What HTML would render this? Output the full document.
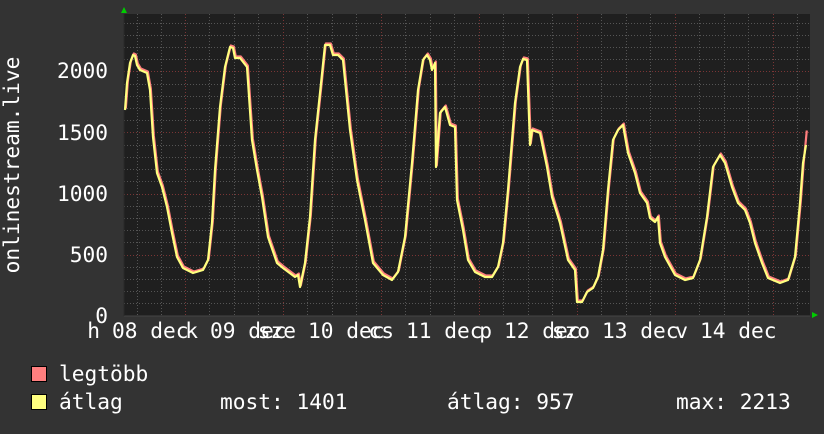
<!DOCTYPE html>
<html><head><meta charset="utf-8"><style>
html,body{margin:0;padding:0;background:#333333;}
body{width:824px;height:430px;overflow:hidden;position:relative;font-family:"DejaVu Sans Mono","Liberation Mono",monospace;color:#fff;}
svg text{font-family:"DejaVu Sans Mono","Liberation Mono",monospace;fill:#fff;}
</style></head><body>
<svg width="824" height="430" viewBox="0 0 824 430" xmlns="http://www.w3.org/2000/svg">
<rect x="0" y="0" width="824" height="430" fill="#333333"/>
<rect x="124" y="14" width="686" height="302" fill="#1f1f1f"/>
<g stroke="#555" stroke-width="1" stroke-dasharray="1,2">
<path d="M124 303.5H810M124 291.5H810M124 279.5H810M124 267.5H810M124 242.5H810M124 230.5H810M124 218.5H810M124 206.5H810M124 181.5H810M124 169.5H810M124 157.5H810M124 145.5H810M124 120.5H810M124 108.5H810M124 96.5H810M124 84.5H810M124 59.5H810M124 47.5H810M124 35.5H810M124 23.5H810"/>
<path d="M137.5 14V316M161.5 14V316M209.5 14V316M234.5 14V316M258.5 14V316M307.5 14V316M332.5 14V316M356.5 14V316M405.5 14V316M430.5 14V316M454.5 14V316M503.5 14V316M528.5 14V316M552.5 14V316M601.5 14V316M626.5 14V316M650.5 14V316M699.5 14V316M724.5 14V316M748.5 14V316M797.5 14V316"/>
</g>
<g stroke="#7a3535" stroke-width="1" stroke-dasharray="1,2">
<path d="M124 255.5H810M124 194.5H810M124 132.5H810M124 71.5H810"/>
<path d="M185.5 14V316M283.5 14V316M381.5 14V316M479.5 14V316M577.5 14V316M675.5 14V316M773.5 14V316"/>
</g>
<path d="M124 316H810" stroke="#444" stroke-width="1"/>
<path d="M124 14V316" stroke="#2a2a2a" stroke-width="1"/>
<polygon points="121,13 127,13 124,7" fill="#00cc00"/>
<polygon points="812,312 812,318 818,315" fill="#00cc00"/>
<g fill="none" stroke-linejoin="round">
<polyline transform="translate(0.8,-1.5)" stroke="#ff7f7f" stroke-width="2.2" points="125,110 127,83 130,63 133,55 135,56 137,65 140,70 147,73 150,90 153,137 157,173 162,187 167,207 172,233 177,257 183,268 193,273 203,270 208,260 212,223 215,170 220,107 225,67 230,47 233,48 235,58 240,58 247,67 252,140 257,170 262,197 268,237 277,263 283,268 295,277 298,275 300,287 305,263 310,217 315,140 320,93 325,45 330,45 333,55 338,55 343,60 350,130 357,180 365,220 373,263 383,275 392,280 398,272 405,237 412,163 418,90 423,60 427,55 430,60 432,70 435,63 436,167 440,113 445,107 450,125 455,127 457,200 463,230 468,260 475,272 485,277 492,277 498,267 503,243 508,190 515,103 520,67 523,59 527,60 530,145 532,130 540,133 547,167 552,197 560,223 568,260 575,270 577,302 582,302 587,292 593,288 598,277 603,250 608,190 613,140 618,130 623,125 628,153 635,173 640,193 647,203 650,218 655,222 658,217 660,243 665,257 675,275 685,280 693,278 700,260 707,217 713,167 720,155 725,163 732,187 738,203 745,210 750,223 755,243 762,263 768,278 780,283 788,280 795,257 800,203 803,163 806,132"/>
<polyline stroke="#ffff7f" stroke-width="2.2" points="125,110 127,83 130,63 133,55 135,56 137,65 140,70 147,73 150,90 153,137 157,173 162,187 167,207 172,233 177,257 183,268 193,273 203,270 208,260 212,223 215,170 220,107 225,67 230,47 233,48 235,58 240,58 247,67 252,140 257,170 262,197 268,237 277,263 283,268 295,277 298,275 300,287 305,263 310,217 315,140 320,93 325,45 330,45 333,55 338,55 343,60 350,130 357,180 365,220 373,263 383,275 392,280 398,272 405,237 412,163 418,90 423,60 427,55 430,60 432,70 435,63 436,167 440,113 445,107 450,125 455,127 457,200 463,230 468,260 475,272 485,277 492,277 498,267 503,243 508,190 515,103 520,67 523,59 527,60 530,145 532,130 540,133 547,167 552,197 560,223 568,260 575,270 577,302 582,302 587,292 593,288 598,277 603,250 608,190 613,140 618,130 623,125 628,153 635,173 640,193 647,203 650,218 655,222 658,217 660,243 665,257 675,275 685,280 693,278 700,260 707,217 713,167 720,155 725,163 732,187 738,203 745,210 750,223 755,243 762,263 768,278 780,283 788,280 795,257 800,203 803,163 806,145"/>
</g>
<g font-size="21.2" text-anchor="end">
<text x="108" y="78">2000</text>
<text x="108" y="140">1500</text>
<text x="108" y="201">1000</text>
<text x="108" y="262">500</text>
<text x="108" y="323">0</text>
</g>
<text transform="translate(19,165) rotate(-90)" font-size="21.2" text-anchor="middle">onlinestream.live</text>
<g font-size="21.2">
<text x="112" y="338">08 dec</text><text x="100" y="338" text-anchor="end">h</text>
<text x="210" y="338">09 dec</text><text x="198" y="338" text-anchor="end">k</text>
<text x="308" y="338">10 dec</text><text x="296" y="338" text-anchor="end">sze</text>
<text x="406" y="338">11 dec</text><text x="394" y="338" text-anchor="end">cs</text>
<text x="504" y="338">12 dec</text><text x="492" y="338" text-anchor="end">p</text>
<text x="602" y="338">13 dec</text><text x="590" y="338" text-anchor="end">szo</text>
<text x="700" y="338">14 dec</text><text x="688" y="338" text-anchor="end">v</text>
</g>
<rect x="31.5" y="366.5" width="15" height="15" fill="#ff7f7f" stroke="#000"/>
<rect x="31.5" y="394.5" width="15" height="15" fill="#ffff7f" stroke="#000"/>
<g font-size="21.2">
<text x="59" y="381">legtöbb</text>
<text x="59" y="409">átlag</text>
<text x="220" y="409">most: 1401</text>
<text x="447" y="409">átlag: 957</text>
<text x="676" y="409">max: 2213</text>
</g>
</svg>
</body></html>
